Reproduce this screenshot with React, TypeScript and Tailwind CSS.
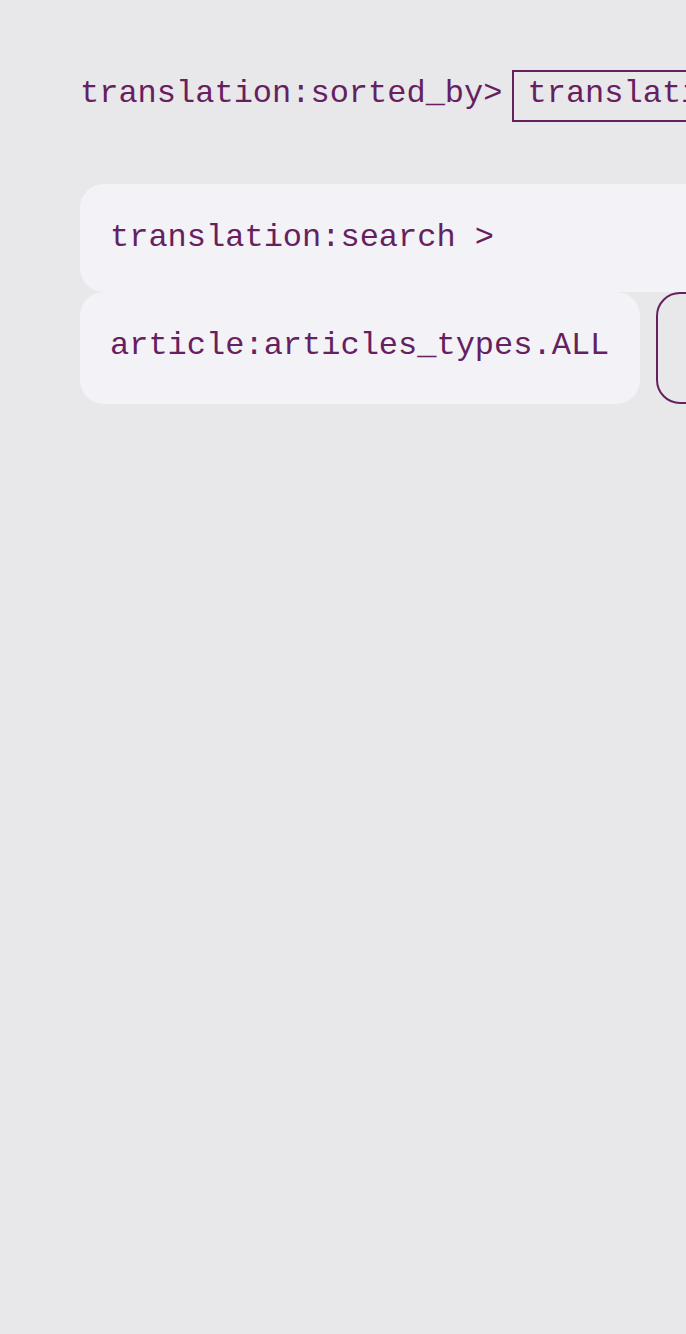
const font = { fontFamily: '"Liberation Mono", monospace' };

export default function App() {
  return (
    <div
      className="min-h-screen w-[686px] overflow-hidden bg-[#e8e7ea] text-[#661f5f] text-[32px] leading-none"
      style={font}
    >
      <div className="pl-[80px] pt-[70px]">
        {/* sort row */}
        <div className="flex items-center whitespace-nowrap">
          <span className="pb-[4px]">translation:sorted_by&gt;</span>
          <div className="ml-[10px] h-[52px] flex items-center border-2 border-[#661f5f] px-[13px] pb-[4px] shrink-0">
            translation:sorted_by_options.newest
          </div>
        </div>

        {/* search */}
        <div className="mt-[62px] w-[800px] h-[108px] flex items-center rounded-[24px] bg-[#f3f2f7] pl-[30px] whitespace-nowrap">
          translation:search &gt;
        </div>

        {/* type filter */}
        <div className="flex gap-[16px] whitespace-nowrap">
          <div className="h-[112px] w-[560px] shrink-0 flex items-center rounded-[24px] bg-[#f3f2f7] pl-[30px] pb-[4px]">
            article:articles_types.ALL
          </div>
          <div className="h-[112px] w-[300px] shrink-0 rounded-[24px] border-2 border-[#661f5f]" />
        </div>
      </div>
    </div>
  );
}
